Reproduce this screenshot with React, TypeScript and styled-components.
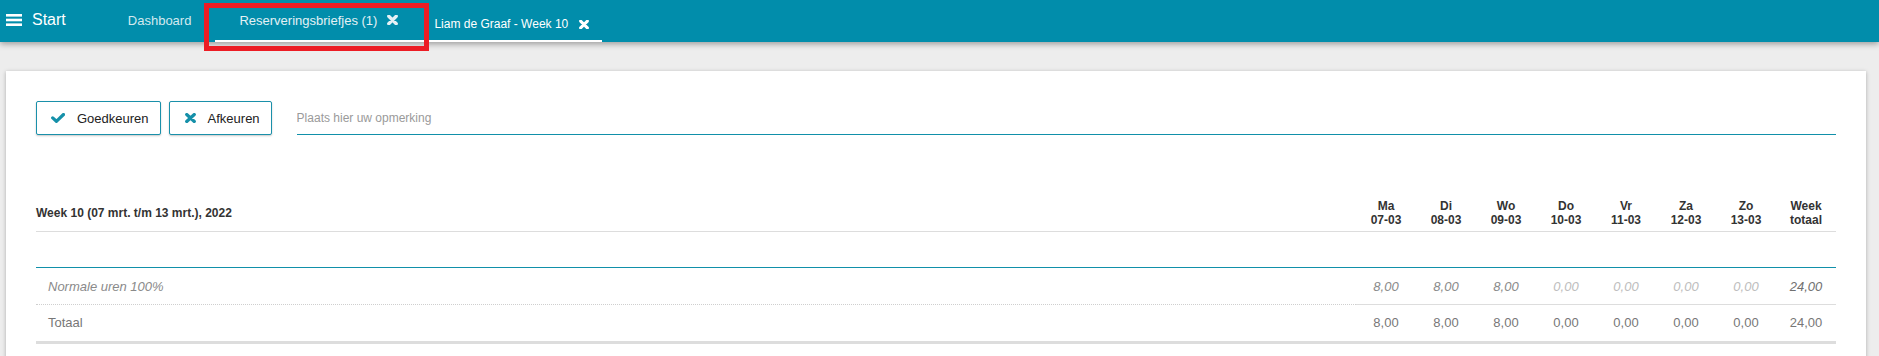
import React from "react";
import styled, { createGlobalStyle } from "styled-components";

const GlobalStyle = createGlobalStyle`
  html, body {
    margin: 0;
    padding: 0;
    background: #ededed;
    font-family: "Liberation Sans", Arial, Helvetica, sans-serif;
  }
  * { box-sizing: border-box; }
`;

const Page = styled.div`
  position: relative;
  min-height: 356px;
  overflow: hidden;
`;

const TopBar = styled.header`
  position: relative;
  z-index: 1;
  height: 42px;
  background: #018dab;
  display: flex;
  align-items: stretch;
  box-shadow: 0 2px 6px rgba(0, 0, 0, 0.35);
`;

const Brand = styled.div`
  display: flex;
  align-items: center;
  gap: 10px;
  padding: 0 38px 2px 6px;
  color: #ffffff;
  font-size: 16px;
`;

type TabKind = "plain" | "active" | "sub";

const Tab = styled.div<{ $kind: TabKind }>`
  display: flex;
  align-items: center;
  height: 42px;
  gap: ${(p) => (p.$kind === "sub" ? "11px" : "10px")};
  padding: ${(p) => (p.$kind === "sub" ? "8px 13px 0 12px" : "0 24px")};
  font-size: ${(p) => (p.$kind === "sub" ? "12px" : "13px")};
  color: ${(p) =>
    p.$kind === "sub" ? "#ffffff" : p.$kind === "active" ? "#e4f1f5" : "#d3e9ef"};
  border-bottom: 2px solid
    ${(p) => (p.$kind === "plain" ? "transparent" : "#ffffff")};
  white-space: nowrap;
`;

const Highlight = styled.div`
  position: absolute;
  z-index: 2;
  left: 204px;
  top: 3px;
  width: 225px;
  height: 48px;
  border: 5px solid #ec1c24;
  pointer-events: none;
`;

const Main = styled.main`
  padding: 29px 13px 0 6px;
`;

const Card = styled.section`
  background: #ffffff;
  box-shadow: 0 1px 4px rgba(0, 0, 0, 0.28);
  padding: 30px 30px 40px;
  min-height: 300px;
`;

const Toolbar = styled.div`
  display: flex;
  align-items: flex-start;
  gap: 8px;
`;

const ActionButton = styled.button<{ $padLeft: number }>`
  display: flex;
  align-items: center;
  gap: 12px;
  height: 34px;
  padding: 0 11px 0 ${(p) => p.$padLeft}px;
  background: #ffffff;
  border: 1px solid #1a90aa;
  border-radius: 2px;
  box-shadow: 0 1px 2px rgba(0, 0, 0, 0.22);
  font-family: inherit;
  font-size: 13px;
  color: #222222;
  cursor: pointer;
`;

const CommentInput = styled.input`
  flex: 1;
  margin-left: 17px;
  height: 34px;
  padding: 0;
  border: none;
  border-bottom: 1px solid #1190aa;
  outline: none;
  font-family: inherit;
  font-size: 12px;
  color: #333;
  background: transparent;
  &::placeholder {
    color: #9a9a9a;
  }
`;

const Table = styled.div`
  margin-top: 60px;
`;

const Row = styled.div<{ $border?: string }>`
  display: grid;
  grid-template-columns: 1fr repeat(8, 60px);
  border-bottom: ${(p) => p.$border || "none"};
`;

const HeadCell = styled.div<{ $center?: boolean }>`
  padding: 4px 0;
  line-height: 14px;
  font-size: 12px;
  font-weight: bold;
  color: #333333;
  text-align: ${(p) => (p.$center ? "center" : "left")};
  align-self: center;
`;

const Spacer = styled.div`
  height: 36px;
  border-bottom: 1px solid #1190aa;
`;

const LabelCell = styled.div<{ $italic?: boolean; $line: string; $h: number }>`
  height: ${(p) => p.$h}px;
  line-height: ${(p) => p.$h}px;
  padding-left: 12px;
  font-size: 13px;
  font-style: ${(p) => (p.$italic ? "italic" : "normal")};
  color: ${(p) => (p.$italic ? "#8a8a8a" : "#777777")};
  border-bottom: ${(p) => p.$line};
`;

const NumCell = styled.div<{ $italic?: boolean; $tone: string; $line: string; $h: number }>`
  height: ${(p) => p.$h}px;
  line-height: ${(p) => p.$h}px;
  text-align: center;
  font-size: 13px;
  font-style: ${(p) => (p.$italic ? "italic" : "normal")};
  color: ${(p) => p.$tone};
  border-bottom: ${(p) => p.$line};
`;

const MenuIcon = () => (
  <svg width="16" height="12" viewBox="0 0 16 12">
    <rect x="0" y="0" width="16" height="2.6" fill="#fff" />
    <rect x="0" y="4.7" width="16" height="2.6" fill="#fff" />
    <rect x="0" y="9.4" width="16" height="2.6" fill="#fff" />
  </svg>
);

const CloseIcon = ({ color, size }: { color: string; size: number }) => (
  <svg width={size} height={size - 1} viewBox="0 0 10 9">
    <path d="M1.6 1.1 L8.4 7.9 M8.4 1.1 L1.6 7.9" stroke={color} strokeWidth="3" strokeLinecap="round" fill="none" />
  </svg>
);

const CheckIcon = () => (
  <svg width="14" height="10" viewBox="0 0 14 10">
    <path d="M1.7 4.9 L5.4 8.3 L12.5 1.5" stroke="#1590a9" strokeWidth="3.2" strokeLinecap="round" strokeLinejoin="round" fill="none" />
  </svg>
);

const TimesIcon = () => (
  <svg width="11" height="10" viewBox="0 0 11 10">
    <path d="M1.7 1.5 L9.3 8.5 M9.3 1.5 L1.7 8.5" stroke="#1590a9" strokeWidth="3.2" strokeLinecap="round" fill="none" />
  </svg>
);

const days = [
  ["Ma", "07-03"],
  ["Di", "08-03"],
  ["Wo", "09-03"],
  ["Do", "10-03"],
  ["Vr", "11-03"],
  ["Za", "12-03"],
  ["Zo", "13-03"],
  ["Week", "totaal"],
];

const hours = ["8,00", "8,00", "8,00", "0,00", "0,00", "0,00", "0,00", "24,00"];

const solid = "1px solid #dddddd";
const dotted = "1px dotted #cfcfcf";
const thick = "3px solid #dddddd";

const normaleTone = (v: string, i: number) =>
  i === 7 ? "#707070" : v === "0,00" ? "#bdbdbd" : "#8a8a8a";

export default function App() {
  return (
    <Page>
      <GlobalStyle />
      <TopBar>
        <Brand>
          <MenuIcon />
          <span>Start</span>
        </Brand>
        <Tab $kind="plain">Dashboard</Tab>
        <Tab $kind="active">
          <span>Reserveringsbriefjes (1)</span>
          <CloseIcon color="#e4f1f5" size={11} />
        </Tab>
        <Tab $kind="sub">
          <span>Liam de Graaf - Week 10</span>
          <CloseIcon color="#ffffff" size={10} />
        </Tab>
      </TopBar>
      <Highlight />
      <Main>
        <Card>
          <Toolbar>
            <ActionButton $padLeft={14}>
              <CheckIcon />
              Goedkeuren
            </ActionButton>
            <ActionButton $padLeft={15}>
              <TimesIcon />
              Afkeuren
            </ActionButton>
            <CommentInput placeholder="Plaats hier uw opmerking" />
          </Toolbar>
          <Table>
            <Row $border={solid}>
              <HeadCell>Week 10 (07 mrt. t/m 13 mrt.), 2022</HeadCell>
              {days.map(([d, dt]) => (
                <HeadCell key={d} $center>
                  {d}
                  <br />
                  {dt}
                </HeadCell>
              ))}
            </Row>
            <Spacer />
            <Row>
              <LabelCell $italic $line={dotted} $h={37}>
                Normale uren 100%
              </LabelCell>
              {hours.map((v, i) => (
                <NumCell key={i} $italic $tone={normaleTone(v, i)} $line={solid} $h={37}>
                  {v}
                </NumCell>
              ))}
            </Row>
            <Row $border={thick}>
              <LabelCell $line="none" $h={36}>
                Totaal
              </LabelCell>
              {hours.map((v, i) => (
                <NumCell key={i} $tone="#777777" $line="none" $h={36}>
                  {v}
                </NumCell>
              ))}
            </Row>
          </Table>
        </Card>
      </Main>
    </Page>
  );
}
